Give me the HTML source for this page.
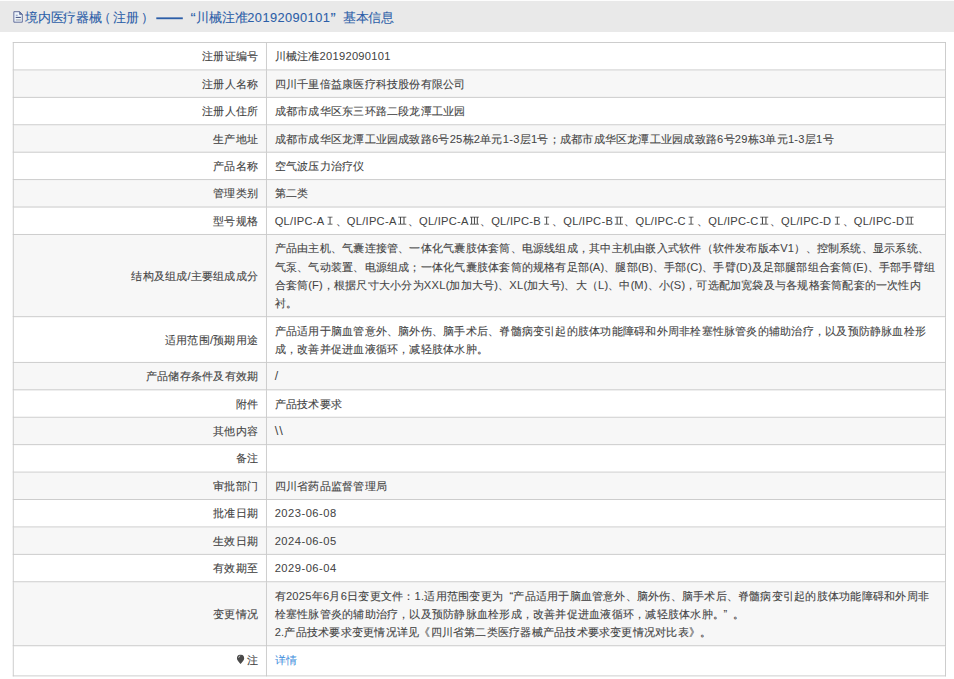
<!DOCTYPE html>
<html><head><meta charset="utf-8">
<style>
html,body{margin:0;padding:0;background:#fff;width:954px;height:679px;overflow:hidden;}
#wrap{position:absolute;left:0;top:0;width:1044px;height:743px;transform:scale(0.914);transform-origin:0 0;font-family:"Liberation Sans",sans-serif;}
.hd{position:absolute;left:0;top:1px;width:1044px;height:34px;background:#e9e9e9;color:#2c5ea8;font-size:14px;-webkit-text-stroke:0.1px #2c5ea8;}
.hd span{position:absolute;top:0;line-height:36px;white-space:nowrap;}
.hd .tq{font-size:17px;line-height:38px;}
.hd .dash{position:absolute;left:171px;top:18.3px;width:29px;height:1.3px;background:#2c5ea8;}
.ic{position:absolute;left:13px;top:11px;}
table{position:absolute;left:13.5px;top:46px;width:1021px;table-layout:fixed;border-collapse:collapse;font-size:12px;letter-spacing:0.29px;color:#444;-webkit-text-stroke:0.12px #444;}
td{border:1px solid #c9c9c9;padding:5px 9px 4px 9px;line-height:20px;white-space:nowrap;vertical-align:middle;}
td.l{width:259px;text-align:right;padding-right:8px;}
tr.g td{background:#f7f7f7;}
a{color:#3d8ddc;text-decoration:none;-webkit-text-stroke:0;}
.rn{vertical-align:baseline;fill:#444;}
.mk{vertical-align:-0.6px;margin-right:2.6px;}
.q{margin-left:7px;margin-right:0px}
.e{letter-spacing:0.29px;font-size:12.2px;-webkit-text-stroke:0.05px #444}
.d{letter-spacing:0.55px}
.p{letter-spacing:0}
.sl{font-size:13.5px;line-height:18px;-webkit-text-stroke:0}
.bs{letter-spacing:1.2px;font-size:14px}
.q2{margin-left:-0.6px;margin-right:6px}
</style></head><body>
<div id="wrap">
<div class="hd"><span style="left:27px;letter-spacing:0.15px">境内医疗器械<b style="font-weight:normal;margin-left:-4.5px">（</b><b style="font-weight:normal;margin-left:2.2px">注册</b><b style="font-weight:normal;margin-left:1.8px">）</b></span><div class="dash"></div><span class="tq" style="left:208.5px">“</span><span style="left:214.6px">川械注准<span style="letter-spacing:0.46px">20192090101</span></span><span class="tq" style="left:361.5px">”</span><span style="left:375px">基本信息</span></div>
<table>
<tr><td class="l">注册证编号</td><td>川械注准<span class="e">20192090101</span></td></tr>
<tr class="g"><td class="l">注册人名称</td><td>四川千里倍益康医疗科技股份有限公司</td></tr>
<tr><td class="l">注册人住所</td><td>成都市成华区东三环路二段龙潭工业园</td></tr>
<tr class="g"><td class="l">生产地址</td><td>成都市成华区龙潭工业园成致路<span class="e">6</span>号<span class="e">25</span>栋<span class="e">2</span>单元<span class="e">1-3</span>层<span class="e">1</span>号；成都市成华区龙潭工业园成致路<span class="e">6</span>号<span class="e">29</span>栋<span class="e">3</span>单元<span class="e">1-3</span>层<span class="e">1</span>号</td></tr>
<tr><td class="l">产品名称</td><td>空气波压力治疗仪</td></tr>
<tr class="g"><td class="l">管理类别</td><td>第二类</td></tr>
<tr><td class="l">型号规格</td><td><span class="e">QL/IPC-A</span><svg class="rn" width="12.2" height="8.9" viewBox="0 0 12 9"><path d="M3.3 0h5.4v1H3.3zM3.3 8h5.4v1H3.3zM5.45 1h1.1v7H5.45z"/></svg>、<span class="e">QL/IPC-A</span><svg class="rn" width="12.2" height="8.9" viewBox="0 0 12 9"><path d="M1.5 0h9v1h-9zM1.5 8h9v1h-9zM3.5 1h1.15v7H3.5zM7.35 1h1.15v7H7.35z"/></svg>、<span class="e">QL/IPC-A</span><svg class="rn" width="12.2" height="8.9" viewBox="0 0 12 9"><path d="M1.1 0h9.8v1H1.1zM1.1 8h9.8v1H1.1zM2.3 1h1.1v7H2.3zM5.45 1h1.1v7H5.45zM8.6 1h1.1v7H8.6z"/></svg>、<span class="e">QL/IPC-B</span><svg class="rn" width="12.2" height="8.9" viewBox="0 0 12 9"><path d="M3.3 0h5.4v1H3.3zM3.3 8h5.4v1H3.3zM5.45 1h1.1v7H5.45z"/></svg>、<span class="e">QL/IPC-B</span><svg class="rn" width="12.2" height="8.9" viewBox="0 0 12 9"><path d="M1.5 0h9v1h-9zM1.5 8h9v1h-9zM3.5 1h1.15v7H3.5zM7.35 1h1.15v7H7.35z"/></svg>、<span class="e">QL/IPC-C</span><svg class="rn" width="12.2" height="8.9" viewBox="0 0 12 9"><path d="M3.3 0h5.4v1H3.3zM3.3 8h5.4v1H3.3zM5.45 1h1.1v7H5.45z"/></svg>、<span class="e">QL/IPC-C</span><svg class="rn" width="12.2" height="8.9" viewBox="0 0 12 9"><path d="M1.5 0h9v1h-9zM1.5 8h9v1h-9zM3.5 1h1.15v7H3.5zM7.35 1h1.15v7H7.35z"/></svg>、<span class="e">QL/IPC-D</span><svg class="rn" width="12.2" height="8.9" viewBox="0 0 12 9"><path d="M3.3 0h5.4v1H3.3zM3.3 8h5.4v1H3.3zM5.45 1h1.1v7H5.45z"/></svg>、<span class="e">QL/IPC-D</span><svg class="rn" width="12.2" height="8.9" viewBox="0 0 12 9"><path d="M1.5 0h9v1h-9zM1.5 8h9v1h-9zM3.5 1h1.15v7H3.5zM7.35 1h1.15v7H7.35z"/></svg></td></tr>
<tr class="g"><td class="l">结构及组成/主要组成成分</td><td>产品由主机、气囊连接管、一体化气囊肢体套筒、电源线组成，其中主机由嵌入式软件（软件发布版本<span class="e">V1</span>）、控制系统、显示系统、<br>气泵、气动装置、电源组成；一体化气囊肢体套筒的规格有足部<span class="p">(</span><span class="e">A</span><span class="p">)</span>、腿部<span class="p">(</span><span class="e">B</span><span class="p">)</span>、手部<span class="p">(</span><span class="e">C</span><span class="p">)</span>、手臂<span class="p">(</span><span class="e">D</span><span class="p">)</span>及足部腿部组合套筒<span class="p">(</span><span class="e">E</span><span class="p">)</span>、手部手臂组<br>合套筒<span class="p">(</span><span class="e">F</span><span class="p">)</span>，根据尺寸大小分为<span class="e">XXL</span><span class="p">(</span>加加大号<span class="p">)</span>、<span class="e">XL</span><span class="p">(</span>加大号<span class="p">)</span>、大（<span class="e">L</span><span class="p">)</span>、中<span class="p">(</span><span class="e">M</span><span class="p">)</span>、小<span class="p">(</span><span class="e">S</span><span class="p">)</span>，可选配加宽袋及与各规格套筒配套的一次性内<br>衬。</td></tr>
<tr><td class="l">适用范围/预期用途</td><td>产品适用于脑血管意外、脑外伤、脑手术后、脊髓病变引起的肢体功能障碍和外周非栓塞性脉管炎的辅助治疗，以及预防静脉血栓形<br>成，改善并促进血液循环，减轻肢体水肿。</td></tr>
<tr class="g"><td class="l">产品储存条件及有效期</td><td><span class="sl">/</span></td></tr>
<tr><td class="l">附件</td><td>产品技术要求</td></tr>
<tr class="g"><td class="l">其他内容</td><td><span class="sl bs">\\</span></td></tr>
<tr><td class="l">备注</td><td></td></tr>
<tr class="g"><td class="l">审批部门</td><td>四川省药品监督管理局</td></tr>
<tr><td class="l">批准日期</td><td><span class="e d">2023-06-08</span></td></tr>
<tr class="g"><td class="l">生效日期</td><td><span class="e d">2024-06-05</span></td></tr>
<tr><td class="l">有效期至</td><td><span class="e d">2029-06-04</span></td></tr>
<tr class="g"><td class="l">变更情况</td><td>有<span class="e">2025</span>年<span class="e">6</span>月<span class="e">6</span>日变更文件：<span class="e">1.</span>适用范围变更为<span class="q">“</span>产品适用于脑血管意外、脑外伤、脑手术后、脊髓病变引起的肢体功能障碍和外周非<br>栓塞性脉管炎的辅助治疗，以及预防静脉血栓形成，改善并促进血液循环，减轻肢体水肿。<span class="q2">”</span>。<br><span class="e">2.</span>产品技术要求变更情况详见《四川省第二类医疗器械产品技术要求变更情况对比表》。</td></tr>
<tr><td class="l" style="height:23px;padding-top:3.9px;padding-bottom:5.1px"><svg class="mk" width="8.4" height="10.6" viewBox="0 0 8.4 10.6"><path d="M4.2 0.2C6.5 0.2 8.2 1.9 8.2 4.1C8.2 6.2 6.2 8.1 4.2 10.4C2.2 8.1 0.2 6.2 0.2 4.1C0.2 1.9 1.9 0.2 4.2 0.2z" fill="#4a4a4a"/><path d="M2.1 3.6C2.2 2.6 2.8 1.9 3.8 1.6" stroke="#e0e0e0" stroke-width="0.9" fill="none"/></svg>注</td><td style="padding-top:3.9px;padding-bottom:5.1px"><a>详情</a></td></tr>
</table>
</div>
<svg class="ic" width="11" height="13" viewBox="0 0 11 13"><path d="M0.85 0.7H6.55L9.3 3.45V11.2H0.85Z" fill="#eef4fb" stroke="#4b5a8c" stroke-width="0.85" stroke-linejoin="round"/><path d="M6.55 0.7V3.45H9.3Z" fill="#7080b0" stroke="#4b5a8c" stroke-width="0.6"/><rect x="2.8" y="3.8" width="1.9" height="0.8" fill="#6a7cb4"/><rect x="2.7" y="5.9" width="5.2" height="1" fill="#3d4c7c"/><rect x="2.8" y="8.3" width="5.1" height="1.3" fill="#b0b4b8"/></svg>
</body></html>
